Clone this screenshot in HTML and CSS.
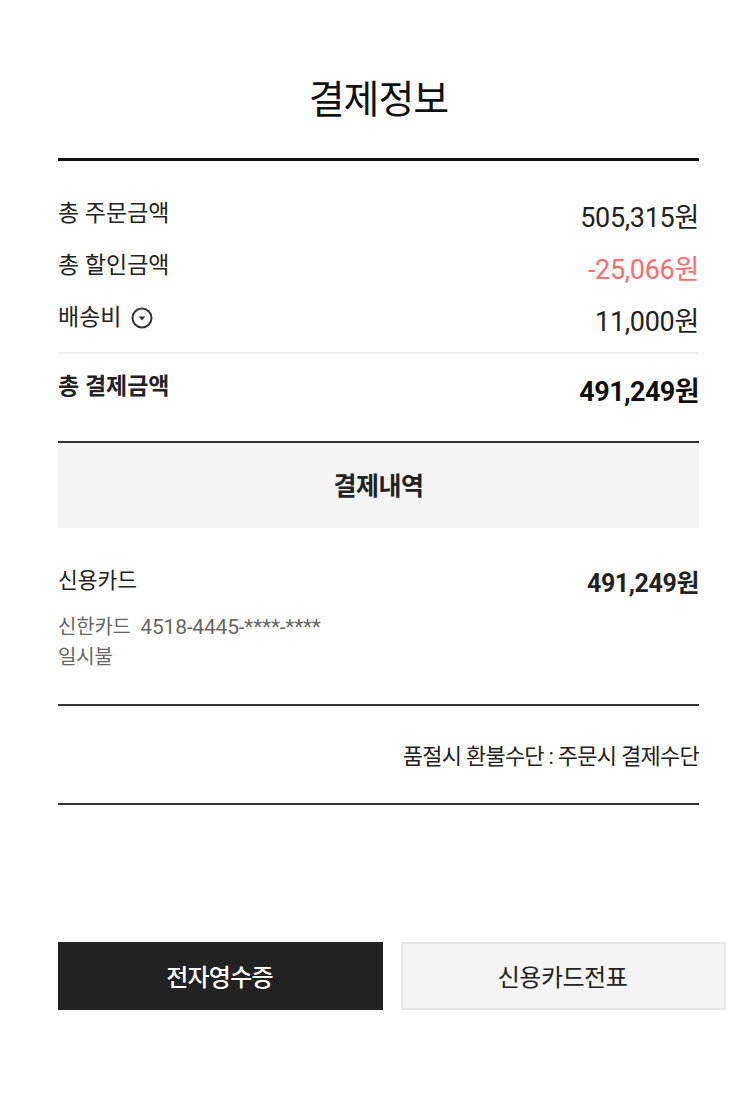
FILE: index.html
```html
<!DOCTYPE html>
<html lang="ko">
  <head>
    <meta charset="utf-8">
    <title>결제정보</title>
    <link rel="stylesheet" href="styles.css">
  </head>
  <body>
    <div class="wrap">
      <h2 class="title">결제정보</h2>

      <div class="summary">
        <div class="row">
          <span class="label">총 주문금액</span>
          <span class="price">505,315원</span>
        </div>
        <div class="row">
          <span class="label">총 할인금액</span>
          <span class="price sale">-25,066원</span>
        </div>
        <div class="row">
          <span class="label">배송비
            <svg class="info-icon" viewBox="0 0 22 22" width="22" height="22">
              <circle cx="11" cy="11" r="9.5" fill="none" stroke="#333" stroke-width="2"/>
              <path d="M7.6 9.4h6.8L11 13.4z" fill="#333"/>
            </svg>
          </span>
          <span class="price">11,000원</span>
        </div>
      </div>

      <div class="row total">
        <span class="label">총 결제금액</span>
        <span class="price">491,249원</span>
      </div>

      <h3 class="sub-title">결제내역</h3>

      <div class="pay-info">
        <div class="row">
          <span class="label">신용카드</span>
          <span class="price">491,249원</span>
        </div>
        <p class="card-text">신한카드&nbsp; <span class="card-num">4518-4445-****-****</span><br>일시불</p>
      </div>

      <p class="refund">품절시 환불수단 : 주문시 결제수단</p>

      <div class="btns">
        <button class="btn btn-dark">전자영수증</button>
        <button class="btn btn-light">신용카드전표</button>
      </div>
    </div>
  </body>
</html>
```

FILE: styles.css
```css
body {
  margin: 0;
  background-color: white;
  color: #222;
  font-family: Roboto, "Noto Sans CJK KR", sans-serif;
}

.wrap {
  width: 641px;
  margin-left: 58px;
  padding-top: 68px;
}

.title {
  margin: 0;
  height: 90px;
  line-height: 65px;
  border-bottom: 3px solid #111;
  text-align: center;
  font-size: 39px;
  font-weight: 400;
  letter-spacing: -1px;
  color: #111;
}

.row {
  display: flex;
  justify-content: space-between;
  align-items: flex-start;
}

.summary {
  display: flex;
  flex-direction: column;
  gap: 14px;
  padding: 34px 0 15px;
  border-bottom: 2px solid #f0f0f0;
}

.summary .row {
  height: 38px;
}

.label {
  display: flex;
  align-items: center;
  gap: 10px;
  font-size: 23px;
  line-height: 38px;
}

.price {
  font-size: 27px;
  line-height: 46px;
  letter-spacing: -0.3px;
}

.sale {
  color: #ff6b6f;
}

.total {
  height: 89px;
  padding-top: 14px;
  box-sizing: border-box;
  border-bottom: 2px solid #333;
  font-weight: 700;
}

.total .price {
  color: #111;
  line-height: 48px;
  letter-spacing: -0.6px;
}

.sub-title {
  margin: 0;
  height: 85px;
  line-height: 88px;
  background-color: #f4f4f4;
  text-align: center;
  font-size: 25px;
  font-weight: 700;
  letter-spacing: -0.5px;
}

.pay-info {
  padding-top: 34px;
  height: 142px;
  border-bottom: 2px solid #333;
}

.pay-info .label {
  font-size: 21.5px;
}

.pay-info .price {
  font-weight: 700;
  font-size: 25px;
  line-height: 44px;
  letter-spacing: -0.4px;
}

.card-text {
  margin: 6px 0 0;
  font-size: 20px;
  line-height: 30px;
  color: #666;
  letter-spacing: -0.2px;
}

.card-num {
  font-size: 21px;
}

.refund {
  margin: 0;
  height: 97px;
  line-height: 102px;
  border-bottom: 2px solid #333;
  text-align: right;
  font-size: 22px;
  letter-spacing: -0.75px;
}

.btns {
  display: flex;
  gap: 18px;
  width: 668px;
  margin-top: 137px;
}

.btn {
  width: 325px;
  height: 68px;
  padding: 0 2px 2px 0;
  font-family: inherit;
  font-size: 24px;
  letter-spacing: -0.8px;
  cursor: pointer;
}

.btn-dark {
  background-color: #222;
  border: 1px solid #222;
  color: white;
  font-weight: 500;
}

.btn-light {
  background-color: #f4f4f4;
  border: 2px solid #e6e6e6;
  color: #222;
  letter-spacing: -0.5px;
}
```
